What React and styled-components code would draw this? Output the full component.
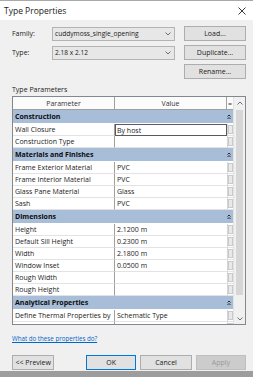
import React from 'react'
import styled, { createGlobalStyle } from 'styled-components'

const rows = [
  { section: 'Construction' },
  { name: 'Wall Closure', value: 'By host', editing: true },
  { name: 'Construction Type', value: '' },
  { section: 'Materials and Finishes' },
  { name: 'Frame Exterior Material', value: 'PVC' },
  { name: 'Frame Interior Material', value: 'PVC' },
  { name: 'Glass Pane Material', value: 'Glass' },
  { name: 'Sash', value: 'PVC' },
  { section: 'Dimensions' },
  { name: 'Height', value: '2.1200 m' },
  { name: 'Default Sill Height', value: '0.2300 m' },
  { name: 'Width', value: '2.1800 m' },
  { name: 'Window Inset', value: '0.0500 m' },
  { name: 'Rough Width', value: '' },
  { name: 'Rough Height', value: '' },
  { section: 'Analytical Properties' },
  { name: 'Define Thermal Properties by', value: 'Schematic Type' },
  { name: '', value: '' },
]

const Global = createGlobalStyle`
  html, body { margin: 0; padding: 0; background: #9d9d9d; }
  body {
    font-family: "Open Sans", "Liberation Sans", sans-serif;
    font-size: 7px;
    color: #000;
  }
`

const Chevron = ({ up }) => (
  <svg width="6" height="4" viewBox="0 0 6 4">
    <path d={up ? 'M0.5 3.5 L3 1 L5.5 3.5' : 'M0.5 0.5 L3 3 L5.5 0.5'} fill="none" stroke="#606060" strokeWidth="0.9" />
  </svg>
)

const Collapse = () => (
  <svg width="4" height="6" viewBox="0 0 4 6">
    <path d="M0.5 2.5 L2 1 L3.5 2.5 M0.5 5 L2 3.5 L3.5 5" fill="none" stroke="#1a1a1a" strokeWidth="0.9" />
  </svg>
)

export default function App() {
  return (
    <>
      <Global />
      <Dialog>
        <TitleBar>
          <span>Type Properties</span>
          <svg width="8" height="8" viewBox="0 0 8 8">
            <path d="M0.5 0.5 L7.5 7.5 M7.5 0.5 L0.5 7.5" stroke="#222" strokeWidth="0.9" />
          </svg>
        </TitleBar>
        <Body>
          <TopGrid>
            <Label>Family:</Label>
            <Combo>
              <span>cuddymoss_single_opening</span>
              <Chevron />
            </Combo>
            <Button>Load...</Button>
            <Label>Type:</Label>
            <Combo>
              <span>2.18 x 2.12</span>
              <Chevron />
            </Combo>
            <Button>Duplicate...</Button>
            <span />
            <span />
            <Button>Rename...</Button>
          </TopGrid>

          <Caption>Type Parameters</Caption>

          <Table>
            <Grid>
              <HeadCell>Parameter</HeadCell>
              <HeadCell>Value</HeadCell>
              <HeadCell $eq>=</HeadCell>
              {rows.map((r, i) =>
                r.section ? (
                  <Section key={i}>
                    <span>{r.section}</span>
                    <Collapse />
                  </Section>
                ) : (
                  <React.Fragment key={i}>
                    <NameCell>{r.name}</NameCell>
                    <ValueCell $editing={r.editing}>{r.value}</ValueCell>
                    <EqCell><EqBox /></EqCell>
                  </React.Fragment>
                )
              )}
            </Grid>
            <ScrollBar>
              <ScrollArrow><Chevron up /></ScrollArrow>
              <Track><Thumb /></Track>
              <ScrollArrow><Chevron /></ScrollArrow>
            </ScrollBar>
          </Table>

          <HelpLink>What do these properties do?</HelpLink>

          <Footer>
            <Button $w={43}>&lt;&lt; Preview</Button>
            <Spacer />
            <Button $w={51} $default>OK</Button>
            <Button $w={52}>Cancel</Button>
            <Button $w={51} $disabled>Apply</Button>
          </Footer>
        </Body>
      </Dialog>
    </>
  )
}

const Dialog = styled.div`
  width: 253px;
  height: 371px;
  box-sizing: border-box;
  border-top: 1px solid #a9a9a9;
  background: #f0f0f0;
  display: flex;
  flex-direction: column;
`

const TitleBar = styled.div`
  height: 19px;
  background: #fff;
  display: flex;
  align-items: center;
  justify-content: space-between;
  padding: 0 7px 0 4px;
  font-size: 8.5px;
  color: #1a1a1a;
`

const Body = styled.div`
  flex: 1;
  display: flex;
  flex-direction: column;
  padding: 6px 7px 0 12px;
`

const TopGrid = styled.div`
  display: grid;
  grid-template-columns: 40px 1fr 62px;
  grid-auto-rows: 15px;
  row-gap: 4px;
  align-items: center;
`

const Label = styled.div`
  color: #1a1a1a;
`

const Combo = styled.div`
  height: 14px;
  box-sizing: border-box;
  margin-right: 9px;
  padding: 0 3px 0 2px;
  background: #e7e7e7;
  border: 1px solid #b3b3b3;
  display: flex;
  align-items: center;
  justify-content: space-between;
  font-size: 6.6px;
  color: #1a1a1a;
`

const Button = styled.div`
  height: 15px;
  box-sizing: border-box;
  width: ${p => (p.$w ? `${p.$w}px` : 'auto')};
  background: ${p => (p.$disabled ? '#cccccc' : '#e1e1e1')};
  border: 1px solid ${p => (p.$default ? '#0078d7' : p.$disabled ? '#bfbfbf' : '#adadad')};
  color: ${p => (p.$disabled ? '#9a9a9a' : '#1a1a1a')};
  display: flex;
  align-items: center;
  justify-content: center;
`

const Caption = styled.div`
  margin-top: 5px;
  height: 11px;
  line-height: 11px;
  color: #1a1a1a;
`

const Table = styled.div`
  margin-top: 1px;
  height: 229px;
  box-sizing: border-box;
  border: 1px solid #828790;
  display: flex;
  overflow: hidden;
  background: #fff;
`

const Grid = styled.div`
  flex: 1;
  display: grid;
  grid-template-columns: 102px 112px 1fr;
  grid-auto-rows: min-content;
  align-content: start;
`

const HeadCell = styled.div`
  height: 13px;
  box-sizing: border-box;
  border-bottom: 1px solid #a0a0a0;
  border-right: ${p => (p.$eq ? 'none' : '1px solid #a0a0a0')};
  background: #fbfbfb;
  display: flex;
  align-items: center;
  justify-content: center;
  color: #333;
`

const Section = styled.div`
  grid-column: 1 / -1;
  height: 14px;
  box-sizing: border-box;
  border-bottom: 1px solid #fff;
  background: #a8bed8;
  font-weight: 700;
  display: flex;
  align-items: center;
  justify-content: space-between;
  padding: 0 2px 0 2px;
  color: #0c0c0c;
`

const NameCell = styled.div`
  height: 12px;
  box-sizing: border-box;
  border-bottom: 1px solid #e3e3e3;
  border-right: 1px solid #a0a0a0;
  padding-left: 2px;
  display: flex;
  align-items: center;
  white-space: nowrap;
  overflow: hidden;
  color: #1a1a1a;
`

const ValueCell = styled.div`
  height: 12px;
  box-sizing: border-box;
  border-bottom: 1px solid #e3e3e3;
  border: ${p => (p.$editing ? '1px solid #5a5a5a' : undefined)};
  padding-left: ${p => (p.$editing ? '1px' : '2px')};
  display: flex;
  align-items: center;
  white-space: nowrap;
  color: #1a1a1a;
`

const EqCell = styled.div`
  height: 12px;
  box-sizing: border-box;
  border-bottom: 1px solid #e3e3e3;
  border-left: 1px solid #d5d5d5;
  display: flex;
  justify-content: center;
  padding: 1px 0;
`

const EqBox = styled.div`
  width: 5px;
  box-sizing: border-box;
  border: 1px solid #c9c9c9;
  background: #e9e9e9;
`

const ScrollBar = styled.div`
  width: 11px;
  border-left: 1px solid #e2e2e2;
  background: #f0f0f0;
  display: flex;
  flex-direction: column;
`

const ScrollArrow = styled.div`
  height: 11px;
  display: flex;
  align-items: center;
  justify-content: center;
`

const Track = styled.div`
  flex: 1;
  padding: 2px 2px 18px 2px;
  display: flex;
`

const Thumb = styled.div`
  flex: 1;
  background: #d6d6d6;
`

const HelpLink = styled.a`
  margin-top: 8px;
  height: 12px;
  line-height: 12px;
  font-size: 6.2px;
  color: #0066cc;
  text-decoration: underline;
  cursor: pointer;
`

const Footer = styled.div`
  margin-top: 10px;
  display: flex;
  gap: 4px;
`

const Spacer = styled.div`
  width: 24px;
`
